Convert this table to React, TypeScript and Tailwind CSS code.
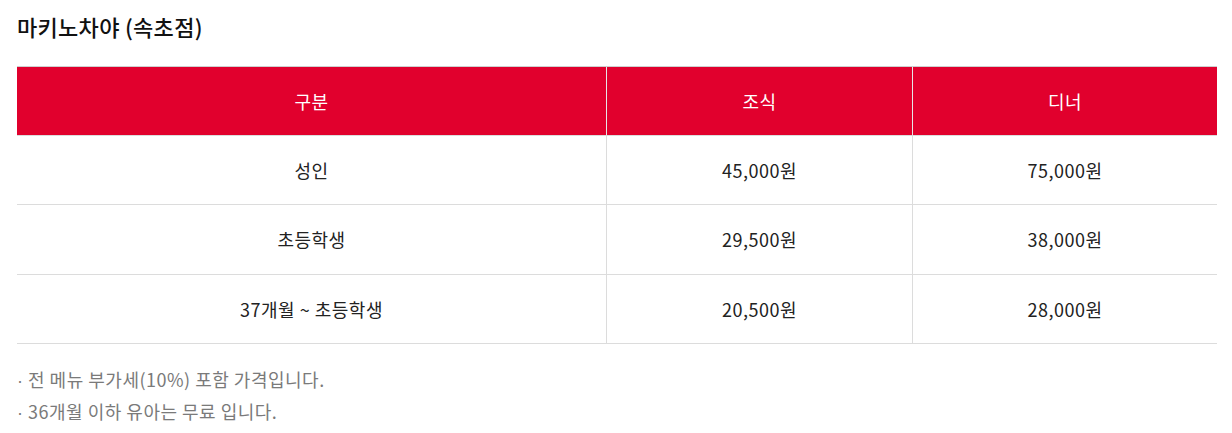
import React from "react";

const rows = [
  ["성인", "45,000원", "75,000원"],
  ["초등학생", "29,500원", "38,000원"],
  ["37개월 ~ 초등학생", "20,500원", "28,000원"],
];

export default function App() {
  return (
    <div
      className="bg-white w-[1232px] h-[433px] pl-[17px] pr-[15px] pt-[11px]"
      style={{ fontFamily: '"Noto Sans CJK KR", "Noto Sans", sans-serif' }}
    >
      <h2 className="text-[22px] leading-[30px] font-medium text-[#111] tracking-[0.3px]">마키노차야 (속초점)</h2>
      <div className="mt-[25px] border-t border-[#cfcfcf]">
        <div className="grid grid-cols-[590px_306px_304px] h-[69px] bg-[#e1002d] border-b border-[#dcdcdc] text-white text-[18px] tracking-[0.5px]">
          <div className="flex items-center justify-center border-r border-[#e6e6e6]">구분</div>
          <div className="flex items-center justify-center border-r border-[#e6e6e6]">조식</div>
          <div className="flex items-center justify-center">디너</div>
        </div>
        {rows.map((r, i) => (
          <div
            key={i}
            className={`grid grid-cols-[590px_306px_304px] ${i === 1 ? "h-[70px]" : "h-[69px]"} border-b border-[#dcdcdc] text-[18px] text-[#222] tracking-[0.5px]`}
          >
            <div className="flex items-center justify-center border-r border-[#dcdcdc]">{r[0]}</div>
            <div className="flex items-center justify-center border-r border-[#dcdcdc]">{r[1]}</div>
            <div className="flex items-center justify-center">{r[2]}</div>
          </div>
        ))}
      </div>
      <div className="mt-[20px] text-[18px] leading-[30px] text-[#7a7a7a] tracking-[0.5px]">
        <p>
          <span style={{ fontFamily: '"Liberation Sans", sans-serif' }}>·</span> 전 메뉴 부가세(10%) 포함 가격입니다.
        </p>
        <p>
          <span style={{ fontFamily: '"Liberation Sans", sans-serif' }}>·</span> 36개월 이하 유아는 무료 입니다.
        </p>
      </div>
    </div>
  );
}
